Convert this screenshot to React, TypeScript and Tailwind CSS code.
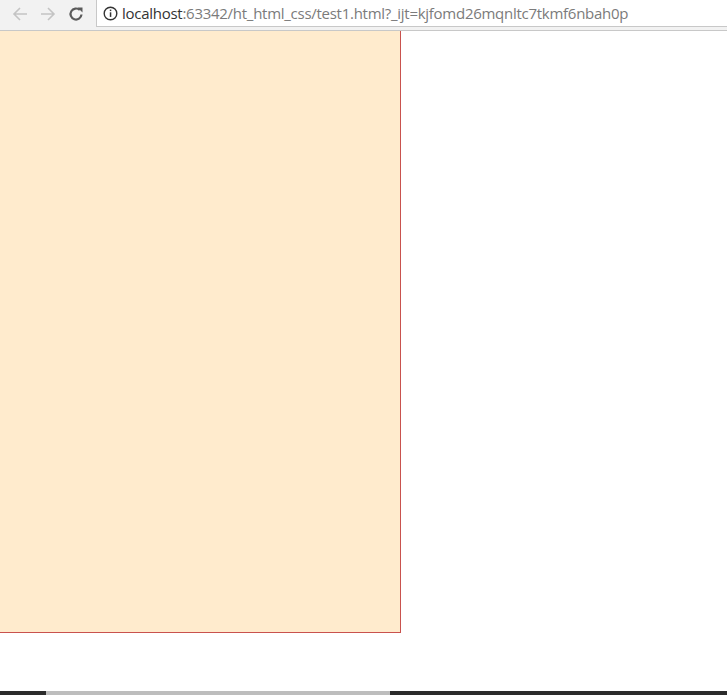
export default function App() {
  return (
    <div className="w-[727px] h-[695px] bg-white flex flex-col overflow-hidden relative" style={{ fontFamily: '"Open Sans", "Noto Sans", sans-serif' }}>
      <div className="h-[31px] flex items-start bg-[#f2f2f2] border-b border-[#c8c8c8] shrink-0">
        <div className="w-[96px] h-[27px] flex items-center gap-[10px] pl-[11px]">
          <svg width="18" height="18" viewBox="0 0 18 18" fill="none" stroke="#c4c4c4" strokeWidth="1.6">
            <path d="M16 9H3M9 3L3 9l6 6" />
          </svg>
          <svg width="18" height="18" viewBox="0 0 18 18" fill="none" stroke="#c4c4c4" strokeWidth="1.6">
            <path d="M2 9h13M9 3l6 6-6 6" />
          </svg>
          <svg width="18" height="18" viewBox="0 0 18 18" fill="none" stroke="#5a5a5a" strokeWidth="2.2">
            <path d="M14.5 9.5A5.5 5.5 0 1 1 12.8 5" />
            <path d="M10.5 2.5h5v5z" fill="#5a5a5a" stroke="none" />
          </svg>
        </div>
        <div className="flex-1 h-[27px] bg-white border-l border-b border-[#c8c8c8] flex items-center pl-[6px] gap-[4px]">
          <svg width="15" height="15" viewBox="0 0 15 15" fill="none">
            <circle cx="7.5" cy="7.5" r="6.3" stroke="#333" strokeWidth="1.4" />
            <rect x="6.8" y="6.3" width="1.5" height="4.6" fill="#333" />
            <rect x="6.8" y="3.6" width="1.5" height="1.5" fill="#333" />
          </svg>
          <span className="text-[15px] leading-none text-[#333] tracking-[-0.27px] pt-[1px]">
            localhost<span className="text-[#7b7b7b]">:63342/ht_html_css/test1.html?_ijt=kjfomd26mqnltc7tkmf6nbah0p</span>
          </span>
        </div>
      </div>
      <div className="flex-1">
        <div className="w-[401px] h-[602px] bg-[#ffebcd] border-r border-b border-[#c9524e]" />
      </div>
      <div className="h-[4px] flex shrink-0">
        <div className="w-[46px] bg-[#2b2b2b]" />
        <div className="w-[344px] bg-[#bdbdbd]" />
        <div className="flex-1 bg-[#2b2b2b]" />
      </div>
    </div>
  );
}
